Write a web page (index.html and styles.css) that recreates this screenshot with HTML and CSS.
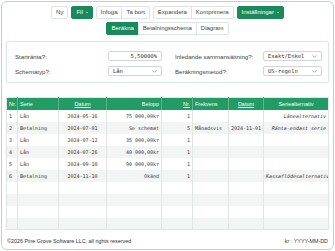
FILE: index.html
```html
<!DOCTYPE html>
<html lang="sv">
<head>
<meta charset="utf-8">
<title>Kalkylator</title>
<link rel="stylesheet" href="styles.css">
</head>
<body>
<div class="app">
  <div class="toolbar">
    <div class="row">
      <button class="btn">Ny</button>
      <button class="btn green">Fil <span class="caret"></span></button>
      <div class="group"><button class="btn">Infoga</button><button class="btn">Ta bort</button></div>
      <div class="group"><button class="btn">Expandera</button><button class="btn">Komprimera</button></div>
      <button class="btn green">Inställningar <span class="caret"></span></button>
    </div>
    <div class="row">
      <div class="group"><button class="btn green">Beräkna</button><button class="btn">Betalningsschema</button><button class="btn">Diagram</button></div>
    </div>
  </div>

  <div class="panel">
    <div class="field left">
      <span class="label">Startränta?:</span>
      <div class="control input num">5,50000%</div>
    </div>
    <div class="field right">
      <span class="label">Inledande sammansättning?:</span>
      <div class="control select"><span>Exakt/Enkel</span><svg class="chev" viewBox="0 0 6 4" width="5" height="3"><polyline points="0.5,0.5 3,3 5.5,0.5"/></svg></div>
    </div>
    <div class="field left">
      <span class="label">Schematyp?:</span>
      <div class="control select"><span>Lån</span><svg class="chev" viewBox="0 0 6 4" width="5" height="3"><polyline points="0.5,0.5 3,3 5.5,0.5"/></svg></div>
    </div>
    <div class="field right">
      <span class="label">Beräkningsmetod?:</span>
      <div class="control select"><span>US-regeln</span><svg class="chev" viewBox="0 0 6 4" width="5" height="3"><polyline points="0.5,0.5 3,3 5.5,0.5"/></svg></div>
    </div>
  </div>

  <table class="grid">
    <colgroup>
      <col class="c-nr"><col class="c-serie"><col class="c-datum"><col class="c-belopp">
      <col class="c-nr2"><col class="c-frek"><col class="c-datum2"><col>
    </colgroup>
    <thead>
      <tr>
        <th class="l">Nr.</th>
        <th class="l">Serie</th>
        <th class="c"><u>Datum</u></th>
        <th class="r">Belopp</th>
        <th class="r"><u>Nr.</u></th>
        <th class="l">Frekvens</th>
        <th class="c"><u>Datum</u></th>
        <th class="c">Seriealternativ</th>
      </tr>
    </thead>
    <tbody>
      <tr><td>1</td><td>Lån</td><td class="c">2024-05-16</td><td class="r">75 000,00kr</td><td class="r">1</td><td></td><td></td><td class="r i">Lånealternativ</td></tr>
      <tr><td>2</td><td>Betalning</td><td class="c">2024-07-01</td><td class="r">Se schemat</td><td class="r">5</td><td>Månadsvis</td><td class="c">2024-11-01</td><td class="r i">Ränta-endast serie</td></tr>
      <tr><td>3</td><td>Lån</td><td class="c">2024-07-12</td><td class="r">35 000,00kr</td><td class="r">1</td><td></td><td></td><td></td></tr>
      <tr><td>4</td><td>Lån</td><td class="c">2024-07-26</td><td class="r">40 000,00kr</td><td class="r">1</td><td></td><td></td><td></td></tr>
      <tr><td>5</td><td>Lån</td><td class="c">2024-09-10</td><td class="r">90 000,00kr</td><td class="r">1</td><td></td><td></td><td></td></tr>
      <tr><td>6</td><td>Betalning</td><td class="c">2024-11-10</td><td class="r">Okänd</td><td class="r">1</td><td></td><td></td><td class="r i">Kassaflödesalternativ</td></tr>
      <tr><td></td><td></td><td></td><td></td><td></td><td></td><td></td><td></td></tr>
      <tr><td></td><td></td><td></td><td></td><td></td><td></td><td></td><td></td></tr>
      <tr><td></td><td></td><td></td><td></td><td></td><td></td><td></td><td></td></tr>
      <tr><td></td><td></td><td></td><td></td><td></td><td></td><td></td><td></td></tr>
    </tbody>
  </table>

  <div class="footer">
    <span>©2026 Pine Grove Software LLC, all rights reserved</span>
    <span>kr : YYYY-MM-DD</span>
  </div>
</div>
</body>
</html>
```

FILE: styles.css
```css
* { box-sizing: border-box; }
html, body { margin: 0; padding: 0; background: #fff; }
body { font-family: "Liberation Sans", Arial, sans-serif; color: #333; }

.app {
  margin: 1px;
  height: 249px;
  border: 1px solid #a9ddca;
  border-radius: 6px;
  padding: 4px 4px 0 4px;
  display: flex;
  flex-direction: column;
}

.toolbar { display: flex; flex-direction: column; gap: 3px; align-items: center; }
.row { display: flex; gap: 3px; justify-content: center; }
.group { display: flex; }
.group .btn + .btn { margin-left: -1px; }
.group .btn { border-radius: 0; }
.group .btn:first-child { border-radius: 2px 0 0 2px; }
.group .btn:last-child { border-radius: 0 2px 2px 0; }

.btn {
  font-family: "Liberation Sans", Arial, sans-serif;
  font-size: 6px;
  line-height: 11px;
  height: 13px;
  padding: 0 4px;
  margin: 0;
  border: 1px solid #dde2e5;
  border-radius: 2px;
  background: #fff;
  color: #3a3f44;
  display: inline-flex;
  align-items: center;
  gap: 2px;
  white-space: nowrap;
}
.btn.green { background: #1a8a5c; border-color: #1a8a5c; color: #fff; }
.caret {
  width: 0; height: 0;
  border-left: 1.5px solid transparent;
  border-right: 1.5px solid transparent;
  border-top: 1.5px solid #fff;
  margin-left: 1px;
}

.panel {
  margin-top: 6px;
  border: 1px solid #d3e8e0;
  border-radius: 2px;
  padding: 9px 6px 6px 8px;
  display: grid;
  grid-template-columns: 147px 147px;
  column-gap: 13px;
  row-gap: 5px;
}
.field { display: flex; align-items: center; justify-content: space-between; height: 10px; }
.label { font-size: 6.1px; color: #444; white-space: nowrap; }
.control {
  height: 10px;
  border: 1px solid #cfd5da;
  border-radius: 2px;
  background: #fff;
  font-family: "DejaVu Sans Mono", "Liberation Mono", monospace;
  font-size: 5.5px;
  color: #333;
  display: flex;
  align-items: center;
  padding: 0 4px;
}
.left .control { width: 54px; }
.right .control { width: 59px; }
.control.num { justify-content: flex-end; }
.control.select { justify-content: space-between; }
.chev { fill: none; stroke: #888; stroke-width: 1; }

.grid {
  margin-top: 14px;
  width: 100%;
  border-collapse: collapse;
  table-layout: fixed;
  border: 1px solid #dfe5e2;
}
.c-nr { width: 11px; }
.c-serie { width: 41px; }
.c-datum { width: 48px; }
.c-belopp { width: 55px; }
.c-nr2 { width: 31px; }
.c-frek { width: 36px; }
.c-datum2 { width: 35px; }

.grid th {
  background: #229b64;
  color: #fff;
  font-weight: normal;
  font-size: 5.5px;
  height: 12px;
  padding: 0 2px;
  border-left: 1px solid #5bb68a;
  white-space: nowrap;
  overflow: hidden;
}
.grid th:first-child { border-left: none; }
.grid td {
  font-family: "DejaVu Sans Mono", "Liberation Mono", monospace;
  font-size: 5px;
  color: #333;
  height: 12px;
  padding: 0 2px;
  border-left: 1px solid #e0e6e3;
  white-space: nowrap;
  overflow: hidden;
}
.grid td:first-child { border-left: none; }
.grid tbody tr:nth-child(even) td { background: #f2f5f4; }
.l { text-align: left; }
.c { text-align: center; }
.r { text-align: right; }
.i { font-style: italic; }

.footer {
  display: flex;
  justify-content: space-between;
  align-items: center;
  font-size: 5.4px;
  color: #333;
  padding: 7px 1px 0 1px;
  line-height: 8px;
}
```
